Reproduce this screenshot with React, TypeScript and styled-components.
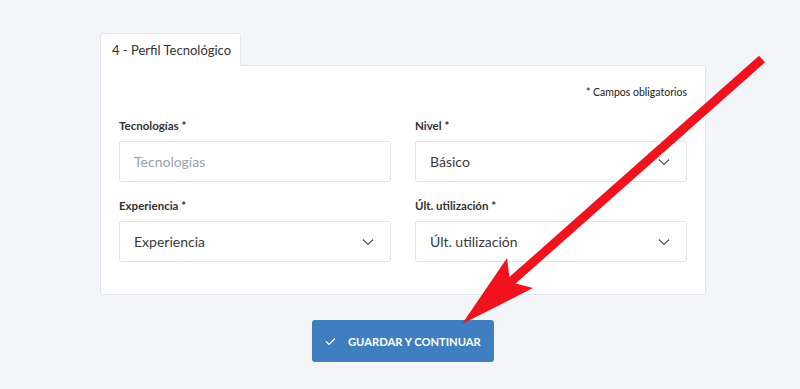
import React from 'react'
import styled, { createGlobalStyle } from 'styled-components'

const GlobalStyle = createGlobalStyle`
  html, body {
    margin: 0;
    padding: 0;
    background: #f4f5f9;
  }
  body {
    font-family: Lato, 'Liberation Sans', sans-serif;
    color: #333;
  }
`

const Page = styled.div`
  position: relative;
  width: 800px;
  height: 389px;
  overflow: hidden;
  padding-top: 33px;
  box-sizing: border-box;
`

const Wrapper = styled.div`
  width: 606px;
  margin-left: 100px;
  display: flex;
  flex-direction: column;
`

const Tab = styled.div`
  align-self: flex-start;
  width: 141px;
  height: 33px;
  box-sizing: border-box;
  background: #fff;
  border: 1px solid #e2e5ea;
  border-bottom: none;
  border-radius: 3px 3px 0 0;
  font-size: 13px;
  color: #333;
  display: flex;
  align-items: center;
  padding-left: 11px;
  margin-bottom: -1px;
  position: relative;
  z-index: 1;
`

const Card = styled.div`
  background: #fff;
  border: 1px solid #e2e5ea;
  border-radius: 0 2px 2px 2px;
  padding: 20px 18px 32px 18px;
  display: flex;
  flex-direction: column;
`

const Required = styled.div`
  align-self: flex-end;
  font-size: 10.5px;
  color: #222;
  margin-bottom: 21px;
`

const Grid = styled.div`
  display: grid;
  grid-template-columns: 1fr 1fr;
  column-gap: 24px;
  row-gap: 17px;
`

const Field = styled.div`
  display: flex;
  flex-direction: column;
`

const Label = styled.label`
  font-size: 11.5px;
  font-weight: 700;
  color: #333;
  height: 14px;
  line-height: 14px;
  margin-bottom: 8px;
`

const Box = styled.div<{ $placeholder?: boolean }>`
  height: 41px;
  box-sizing: border-box;
  border: 1px solid #e2e5ea;
  border-radius: 2px;
  background: #fff;
  display: flex;
  align-items: center;
  justify-content: space-between;
  padding: 0 16px 0 14px;
  font-size: 14px;
  color: ${({ $placeholder }) => ($placeholder ? '#97a2ae' : '#3a3a3a')};
`

const Chevron = () => (
  <svg width="12" height="8" viewBox="0 0 12 8" fill="none">
    <polyline points="1,1.5 6,6.5 11,1.5" stroke="#555" strokeWidth="1.2" />
  </svg>
)

const ButtonRow = styled.div`
  display: flex;
  justify-content: center;
  margin-top: 25px;
`

const SaveButton = styled.button`
  width: 182px;
  height: 42px;
  background: #3f7fbf;
  border: none;
  border-radius: 3px;
  color: #fff;
  font-family: Lato, 'Liberation Sans', sans-serif;
  font-size: 11.2px;
  font-weight: 700;
  display: flex;
  align-items: center;
  gap: 12px;
  padding: 0 0 0 13px;
  cursor: pointer;
`

const Arrow = styled.svg`
  position: absolute;
  left: 0;
  top: 0;
  pointer-events: none;
`

function Select({ value, placeholder }: { value: string; placeholder?: boolean }) {
  return (
    <Box $placeholder={placeholder}>
      <span>{value}</span>
      <Chevron />
    </Box>
  )
}

export default function App() {
  return (
    <Page>
      <GlobalStyle />
      <Wrapper>
        <Tab>4 - Perfil Tecnológico</Tab>
        <Card>
          <Required>* Campos obligatorios</Required>
          <Grid>
            <Field>
              <Label>Tecnologías *</Label>
              <Box $placeholder>Tecnologías</Box>
            </Field>
            <Field>
              <Label>Nivel *</Label>
              <Select value="Básico" />
            </Field>
            <Field>
              <Label>Experiencia *</Label>
              <Select value="Experiencia" />
            </Field>
            <Field>
              <Label>Últ. utilización *</Label>
              <Select value="Últ. utilización" />
            </Field>
          </Grid>
        </Card>
        <ButtonRow>
          <SaveButton>
            <svg width="11" height="9" viewBox="0 0 11 9" fill="none">
              <polyline points="1,4.5 4,7.5 10,1.5" stroke="#fff" strokeWidth="1.1" />
            </svg>
            GUARDAR Y CONTINUAR
          </SaveButton>
        </ButtonRow>
      </Wrapper>
      <Arrow width="800" height="389" viewBox="0 0 800 389">
        <line x1="762" y1="59" x2="505" y2="287" stroke="#f0121c" strokeWidth="9" strokeLinecap="butt" />
        <polygon points="462,324 507,258 510,282 533,288" fill="#f0121c" />
      </Arrow>
    </Page>
  )
}
